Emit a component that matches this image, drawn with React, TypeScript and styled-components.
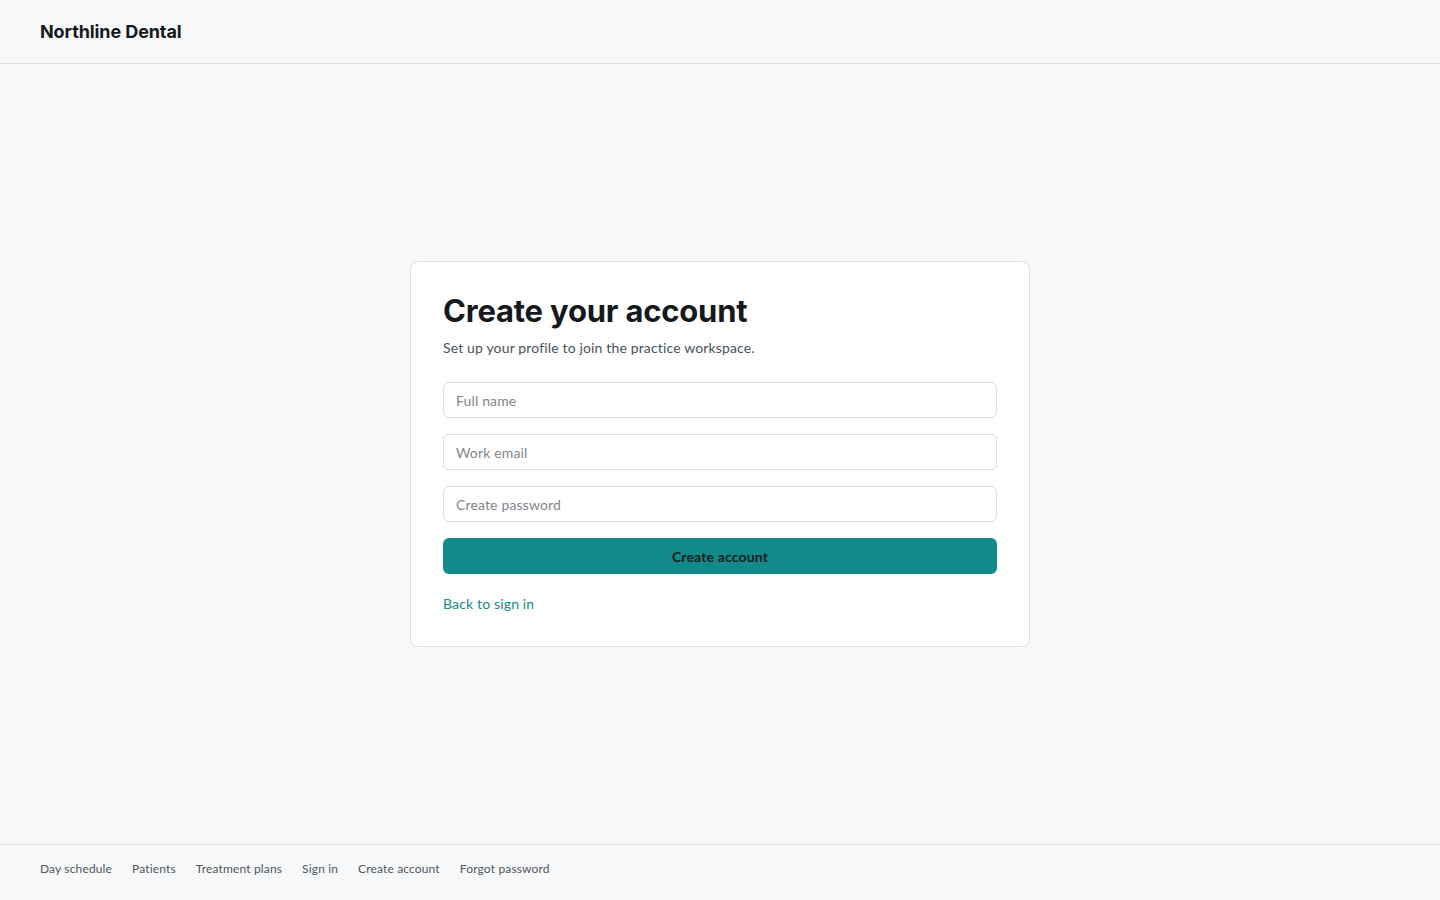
import React from 'react'
import styled, { createGlobalStyle } from 'styled-components'

const GlobalStyle = createGlobalStyle`
  * {
    margin: 0;
    padding: 0;
    box-sizing: border-box;
  }

  html, body, #root {
    height: 100%;
  }

  body {
    font-family: Lato, 'Noto Sans', sans-serif;
    letter-spacing: 0.15px;
    background: #f6f8f9;
    color: #15191c;
    -webkit-font-smoothing: antialiased;
  }
`

const Page = styled.div`
  min-height: 100vh;
  display: flex;
  flex-direction: column;
`

const Header = styled.header`
  height: 64px;
  display: flex;
  align-items: center;
  padding: 0 40px;
  border-bottom: 1px solid #dfe3e6;
`

const Brand = styled.div`
  font-family: Inter, sans-serif;
  font-size: 18px;
  font-weight: 700;
  letter-spacing: -0.1px;
  color: #15191c;
`

const Main = styled.main`
  flex: 1;
  display: flex;
  align-items: center;
  justify-content: center;
`

const Card = styled.section`
  width: 620px;
  background: #ffffff;
  border: 1px solid #dde1e5;
  border-radius: 8px;
  padding: 32px;
  display: flex;
  flex-direction: column;
`

const Title = styled.h1`
  font-family: Inter, sans-serif;
  font-size: 31px;
  line-height: 34px;
  font-weight: 700;
  letter-spacing: -0.2px;
  color: #15191c;
`

const Subtitle = styled.p`
  margin-top: 10px;
  font-size: 14px;
  line-height: 20px;
  color: #4a5259;
`

const Form = styled.form`
  margin-top: 24px;
  display: flex;
  flex-direction: column;
  gap: 16px;
`

const Input = styled.input`
  height: 36px;
  width: 100%;
  padding: 0 12px;
  border: 1px solid #d7dce0;
  border-radius: 6px;
  font-family: inherit;
  font-size: 14px;
  letter-spacing: 0.15px;
  color: #15191c;
  background: #ffffff;
  outline: none;

  &::placeholder {
    color: #80868c;
  }
`

const Submit = styled.button`
  height: 36px;
  width: 100%;
  border: none;
  border-radius: 6px;
  background: #128a8a;
  color: #0f1c1d;
  font-family: inherit;
  font-size: 14px;
  font-weight: 700;
  letter-spacing: 0.15px;
  cursor: pointer;
`

const BackLink = styled.a`
  margin-top: 20px;
  font-size: 14px;
  line-height: 20px;
  color: #128a8a;
  text-decoration: none;
  align-self: flex-start;
`

const Footer = styled.footer`
  height: 56px;
  display: flex;
  align-items: flex-start;
  gap: 20px;
  padding: 15px 40px 0;
  border-top: 1px solid #dfe3e6;
`

const FooterLink = styled.a`
  font-size: 12px;
  line-height: 18px;
  color: #4f565c;
  text-decoration: none;
`

const footerLinks = ['Day schedule', 'Patients', 'Treatment plans', 'Sign in', 'Create account', 'Forgot password']

export default function App() {
  return (
    <>
      <GlobalStyle />
      <Page>
        <Header>
          <Brand>Northline Dental</Brand>
        </Header>
        <Main>
          <Card>
            <Title>Create your account</Title>
            <Subtitle>Set up your profile to join the practice workspace.</Subtitle>
            <Form onSubmit={e => e.preventDefault()}>
              <Input type="text" placeholder="Full name" />
              <Input type="email" placeholder="Work email" />
              <Input type="password" placeholder="Create password" />
              <Submit type="submit">Create account</Submit>
            </Form>
            <BackLink href="#">Back to sign in</BackLink>
          </Card>
        </Main>
        <Footer>
          {footerLinks.map(label => (
            <FooterLink key={label} href="#">{label}</FooterLink>
          ))}
        </Footer>
      </Page>
    </>
  )
}
